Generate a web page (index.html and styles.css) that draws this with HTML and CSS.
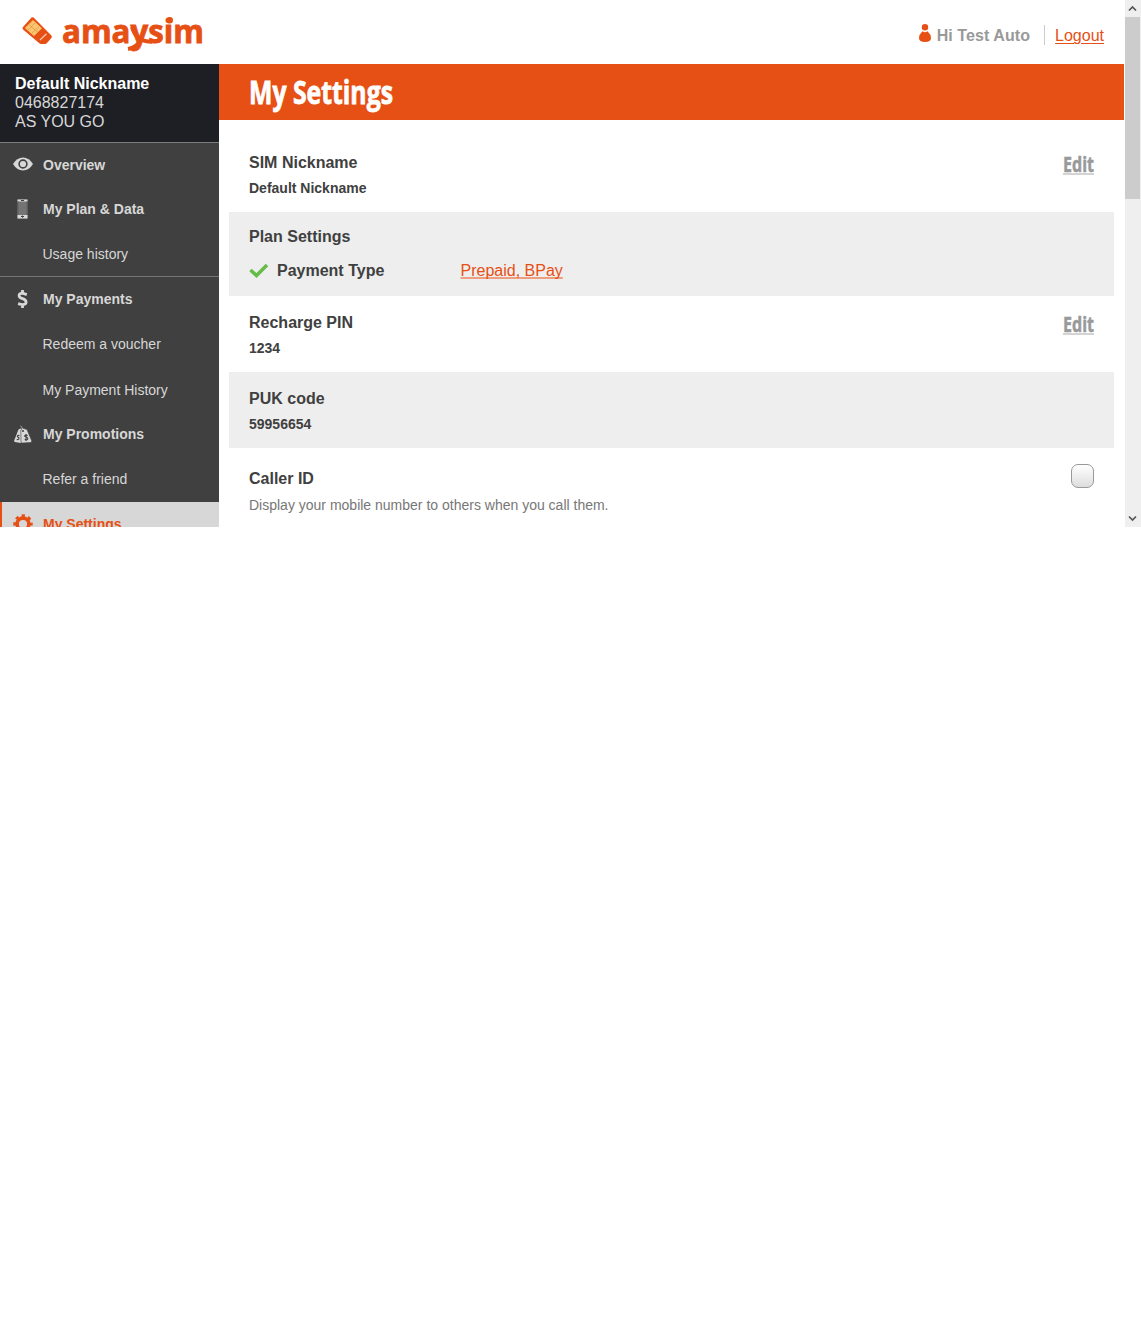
FILE: index.html
```html
<!DOCTYPE html>
<html lang="en">
<head>
<meta charset="utf-8">
<title>My Settings</title>
<link rel="stylesheet" href="styles.css">
</head>
<body>
<div class="viewport">
  <div class="page">
    <header class="header">
      <svg class="logo" width="192" height="56" viewBox="0 0 192 56" role="img" aria-label="amaysim">
        <path d="M15.500 9.500 Q16.500 8.800 17.600 9.500 L35.400 27.500 Q36.400 28.700 35.400 30 L31 35 Q30.200 36 29 36 H25 Q24 36 23 35 L7 21.500 Q6 20.300 7 19 Z" fill="#e65014"/>
        <path d="M17 12.600 L25.400 20.200 L18 27.600 L9.400 20Z" fill="#fcc46c" stroke="#fcc46c" stroke-linejoin="round"/>
        <path d="M13 16.500 L22 24.500 M19 15 L12 22 M23 18.500 L15.500 25.500" fill="none" stroke="#d59a50" stroke-width=".7"/>
        <path d="M30.500 25.700 L24 32" stroke="#f8c9b2" stroke-width="1.200"/>
        <text class="logo-text" x="46" y="35.300" textLength="142" lengthAdjust="spacingAndGlyphs">amaysim</text>
        <path d="M112 41 Q121 39.500 125 31" fill="none" stroke="#e65014" stroke-width="4"/>
        <path d="M116 19 Q120 33.800 136 33.800" fill="none" stroke="#e65014" stroke-width="4"/>
        <circle cx="153.700" cy="12.300" r="3.300" fill="#e65014"/>
      </svg>
      <div class="account">
        <svg class="user-icon" width="12" height="18" viewBox="0 0 12 18"><circle cx="6" cy="3.200" r="3.200" fill="#e65014"/><path d="M3.500 7.300 Q6 9 8.500 7.300 Q12 10.500 12 14 Q12 18 6 18 Q0 18 0 14 Q0 10.500 3.500 7.300Z" fill="#e65014"/></svg>
        <span class="greeting">Hi Test Auto</span>
        <a class="logout">Logout</a>
      </div>
    </header>
    <div class="columns">
      <nav class="sidebar">
        <div class="sim"><b>Default Nickname</b><span>0468827174</span><span>AS YOU GO</span></div>
        <a class="item"><svg class="icon eye" width="20" height="14" viewBox="0 0 20 14"><path d="M0 7 Q4 .5 10 .5 T20 7 Q16 13.500 10 13.500 T0 7Z" fill="#d7d7d7"/><circle cx="10" cy="7" r="3.900" fill="#d7d7d7" stroke="#404040" stroke-width="1.600"/></svg>Overview</a>
        <a class="item"><svg class="icon" width="20" height="20" viewBox="0 0 20 20"><path d="M4.500 .5H14.500V19.500H4.500Z" fill="#747474"/><path d="M4.500 .5H14.500V2.500H4.500ZM4.500 16H14.500V19.500H4.500Z" fill="#d7d7d7"/><path d="M8 1.500H11M8 17.500H11M9.500 16.500V18.700" stroke="#404040"/><path d="M5 2.500V16M14 2.500V16" stroke="#606060"/></svg>My Plan &amp; Data</a>
        <a class="item sub divided">Usage history</a>
        <a class="item"><svg class="icon" width="20" height="20" viewBox="0 0 20 20"><path d="M13.800 5.600Q6.100 2.700 6.100 6.700Q6.100 8.500 9.500 9.600Q13.100 10.700 13.100 13Q13.100 17.100 5.100 14.600M9.500 1V4.500M9.500 15V19" fill="none" stroke="#d7d7d7" stroke-width="2.800"/></svg>My Payments</a>
        <a class="item sub">Redeem a voucher</a>
        <a class="item sub history">My Payment History</a>
        <a class="item"><svg class="icon" width="20" height="20" viewBox="0 0 20 20"><path d="M7.500 4.500L11 6L8 19L1.800 18Q1 17.500 1.200 16.500L5.500 5.500Z" fill="#d7d7d7"/><path d="M7.800 6L10 4.200L14 5.500L18.700 16.800Q18.800 18.300 17.500 18.500L9.500 19Q8.300 19 8 18Z" fill="#d7d7d7" stroke="#404040" stroke-width=".6"/><path d="M9.500 5.500Q9.800 3.500 7.500 2" fill="none" stroke="#d7d7d7" stroke-width=".8"/><circle cx="10" cy="7" r="1" fill="#404040"/><path d="M14.700 11.500Q11.500 10.500 11.700 12.200Q12.200 13 13.500 13.300Q15.400 14.200 14.500 15.500Q13.200 16.200 11.700 15.500M13 10V17M6.500 11.500Q4.500 11 4.400 12.500L6 14Q6.200 16 3.700 15.500" fill="none" stroke="#404040" stroke-width="1.100"/></svg>My Promotions</a>
        <a class="item sub refer">Refer a friend</a>
        <a class="item active"><svg class="icon" width="20" height="20" viewBox="0 0 20 20"><circle cx="10" cy="10" r="5.900" fill="none" stroke="#e65014" stroke-width="3.600"/><circle cx="10" cy="10" r="8.300" fill="none" stroke="#e65014" stroke-width="2.800" stroke-dasharray="3.260 3.260" stroke-dashoffset="1.630"/></svg>My Settings</a>
      </nav>
      <main class="main">
        <h1 class="banner"><svg width="160" height="56"><text class="title" x="0" y="40" textLength="144" lengthAdjust="spacingAndGlyphs">My Settings</text></svg></h1>
        <div class="settings">
          <section class="row nickname">
            <div><h2>SIM Nickname</h2><p class="value">Default Nickname</p></div>
            <a class="edit"><svg width="31" height="24"><text x="0" y="20.500" textLength="31" lengthAdjust="spacingAndGlyphs">Edit</text></svg></a>
          </section>
          <section class="row shaded plan">
            <div><h2>Plan Settings</h2>
              <div class="payment"><svg width="20" height="14" viewBox="0 0 20 14"><path d="M1.500 6L7.500 11.500L18 1" fill="none" stroke="#65bc46" stroke-width="3.500"/></svg><h2>Payment Type</h2><a>Prepaid, BPay</a></div>
            </div>
          </section>
          <section class="row pin">
            <div><h2>Recharge PIN</h2><p class="value">1234</p></div>
            <a class="edit"><svg width="31" height="24"><text x="0" y="20.500" textLength="31" lengthAdjust="spacingAndGlyphs">Edit</text></svg></a>
          </section>
          <section class="row shaded puk"><div><h2>PUK code</h2><p class="value">59956654</p></div></section>
          <section class="row caller">
            <div><h2>Caller ID</h2><p class="description">Display your mobile number to others when you call them.</p></div>
            <span class="checkbox"></span>
          </section>
        </div>
      </main>
    </div>
  </div>
  <div class="scrollbar">
    <svg width="16" height="17"><path d="M4 10.500L7.500 7L11 10.500" fill="none" stroke="#555" stroke-width="1.700"/></svg>
    <div class="thumb"></div>
    <svg class="down" width="16" height="17"><path d="M4 6.500L7.500 10L11 6.500" fill="none" stroke="#555" stroke-width="1.700"/></svg>
  </div>
</div>
</body>
</html>
```
FILE: styles.css
```css
* { box-sizing: border-box; }
body { margin: 0; background: #fff; font-family: "Liberation Sans", Arial, sans-serif; font-size: 16px; color: #404040; }
svg { display: block; flex: none; overflow: visible; }
h1, h2, p { margin: 0; }
.viewport { display: flex; width: 1141px; height: 527px; overflow: hidden; }
.page { width: 1124px; margin-right: 1px; }
.header { display: flex; justify-content: space-between; height: 64px; padding: 8px 20px 0 16px; }
.logo-text { font: bold 32px "Open Sans", sans-serif; fill: #e65014; stroke: #e65014; stroke-width: .8px; }
.account { display: flex; align-items: flex-start; padding-top: 16px; line-height: 22px; }
.greeting { margin: 1px 0 0 6px; font-weight: bold; color: #999; letter-spacing: .08px; }
.logout { margin-left: 14px; padding: 1px 0 0 10px; height: 20px; margin-top: 1px; line-height: 20px; border-left: 1px solid #ccc; color: #e65014; text-decoration: underline; text-decoration-thickness: 1px; text-underline-offset: 2px; }
.columns { display: flex; }
.sidebar { width: 219px; height: 463px; overflow: hidden; background: #404040; color: #d7d7d7; font-size: 14px; }
.sim { display: flex; flex-direction: column; height: 79px; padding: 10px 15px; background: #1e1f25; border-bottom: 1px solid #7c7c7c; font-size: 16px; line-height: 19px; }
.sim b { color: #fff; }
.item { display: flex; align-items: center; height: 44px; padding-left: 13px; font-weight: bold; }
.icon { margin-right: 10px; }
.eye { margin-top: -2px; }
.sub { height: 46px; padding-left: 42.500px; font-weight: normal; }
.divided { border-bottom: 1px solid #747474; }
.history { height: 45px; }
.active { padding-left: 11px; border-left: 2px solid #e65014; background: #d7d7d7; color: #e65014; }
.main { flex: 1; }
.banner { height: 56px; padding-left: 30px; background: #e65014; }
.title { font: bold 33px "Open Sans", sans-serif; fill: #fff; stroke: #fff; stroke-width: .8px; }
.settings { padding: 16px 10px 0; }
.row { display: flex; justify-content: space-between; padding: 17px 20px 0 20px; }
.row h2 { font-size: 16px; line-height: 20px; }
.value { margin-top: 6px; font-size: 14px; line-height: 18px; font-weight: bold; }
.nickname { height: 76px; }
.shaded { background: #eee; }
.plan { height: 84px; padding-top: 15px; }
.pin, .puk { height: 76px; }
.payment { display: flex; align-items: center; margin-top: 14px; }
.payment h2 { width: 183.500px; margin-left: 8px; }
.payment a { color: #e65014; text-decoration: underline; text-decoration-color: #ee9d7e; text-decoration-thickness: 2px; text-underline-offset: 1px; text-decoration-skip-ink: none; }
.edit { height: 24px; margin-top: -2px; border-bottom: 2px solid #d3d3d3; }
.edit text { font: bold 22px "Open Sans", sans-serif; fill: #999; stroke: #999; stroke-width: .5px; }
.caller { padding-top: 21px; }
.description { margin-top: 7px; font-size: 14px; line-height: 18px; color: #777; }
.checkbox { width: 23px; height: 24px; margin: -5px 0 0; border: 1px solid #999; border-radius: 7px; background: linear-gradient(#fff, #ddd); }
.scrollbar { display: flex; flex-direction: column; width: 16px; background: #efefef; }
.thumb { width: 15px; height: 182px; background: #ccc; }
.down { margin-top: auto; }
```
